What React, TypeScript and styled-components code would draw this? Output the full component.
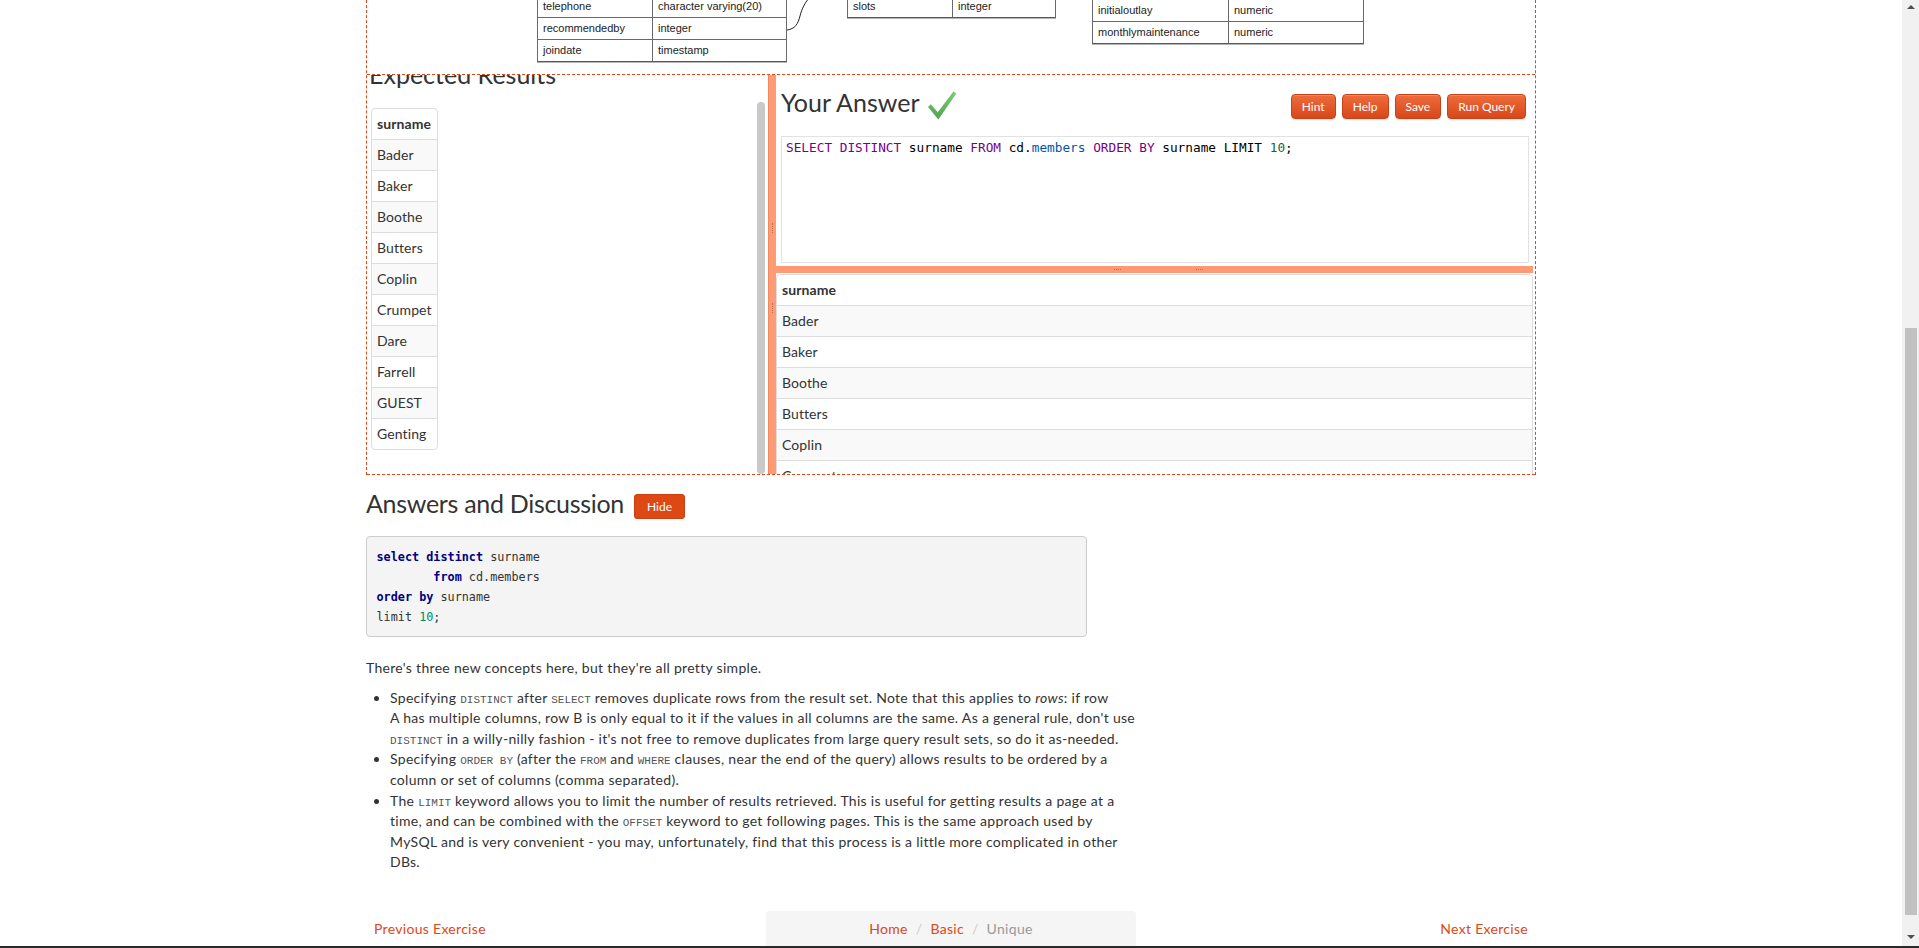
import React from "react";
import styled, { createGlobalStyle } from "styled-components";

const Global = createGlobalStyle`
  html, body { margin: 0; padding: 0; height: 948px; overflow: hidden; background: #fff; }
  body {
    font-family: Lato, "Open Sans", "DejaVu Sans", sans-serif;
    font-size: 14px;
    line-height: 20px;
    letter-spacing: 0.3px;
    color: #333;
  }
  * { box-sizing: border-box; }
`;

const ORANGE = "#dd4814";

/* ---------- window chrome ---------- */
const Viewport = styled.div`
  width: 1919px;
  height: 948px;
  display: flex;
  flex-direction: column;
`;
const Screen = styled.div`
  flex: 1;
  min-height: 0;
  display: flex;
`;
const Main = styled.main`
  flex: 1;
  min-width: 0;
  overflow: hidden;
  display: flex;
  justify-content: center;
`;
const Scrollbar = styled.div`
  width: 17px;
  background: #f1f1f1;
  display: flex;
  flex-direction: column;
  align-items: center;
`;
const ScrollArrow = styled.div<{ $dir: "up" | "down" }>`
  width: 0;
  height: 0;
  margin: ${(p) => (p.$dir === "up" ? "5px 0 8px" : "auto 0 7px")};
  border-left: 4px solid transparent;
  border-right: 4px solid transparent;
  ${(p) =>
    p.$dir === "up"
      ? "border-bottom: 4px solid #505050;"
      : "border-top: 4px solid #505050;"}
`;
const ScrollThumb = styled.div`
  width: 12px;
  height: 587px;
  margin-top: 311px;
  background: #c1c1c1;
`;
const WindowEdge = styled.div`
  height: 2px;
  background: #2a2a2a;
`;

/* ---------- page container ---------- */
const Container = styled.div`
  width: 1170px;
  display: flex;
  flex-direction: column;
`;
const Frame = styled.div`
  flex: none;
  border-left: 1px dashed ${ORANGE};
  border-right: 1px dashed ${ORANGE};
`;

/* ---------- schema diagram ---------- */
const Diagram = styled.div`
  position: relative;
  height: 75px;
  overflow: hidden;
  border-bottom: 1px dashed ${ORANGE};
  letter-spacing: 0;
`;
const SchemaTable = styled.div<{ $left: number; $bottom: number; $width: number }>`
  position: absolute;
  left: ${(p) => p.$left}px;
  bottom: ${(p) => p.$bottom}px;
  width: ${(p) => p.$width}px;
  border-left: 1px solid #6a6a6a;
  border-right: 1px solid #6a6a6a;
  border-bottom: 1px solid #5a5a5a;
  box-shadow: 0 1px 0 #b5b5b5;
  font-family: "Liberation Sans", Arial, sans-serif;
  font-size: 11px;
  color: #222;
`;
const SchemaRow = styled.div<{ $col: number }>`
  display: grid;
  grid-template-columns: ${(p) => p.$col}px 1fr;
  height: 22px;
  border-top: 1px solid #6a6a6a;
`;
const SchemaCell = styled.div`
  padding-left: 5px;
  line-height: 21px;
  white-space: nowrap;
  & + & { border-left: 1px solid #6a6a6a; }
`;
const Connector = styled.svg`
  position: absolute;
  left: 0;
  top: 0;
`;

/* ---------- workspace ---------- */
const Workspace = styled.div`
  height: 400px;
  display: flex;
  border-bottom: 1px dashed ${ORANGE};
`;
const LeftPane = styled.div`
  width: 401px;
  display: flex;
  overflow: hidden;
`;
const LeftContent = styled.div`
  flex: 1;
  padding-left: 4px;
  overflow: hidden;
`;
const ScrolledInner = styled.div`
  margin-top: -28px;
`;
const PaneScroll = styled.div`
  width: 8px;
  margin-right: 3px;
  display: flex;
  flex-direction: column;
`;
const PaneThumb = styled.div`
  flex: 1;
  margin-top: 27px;
  border-radius: 4px;
  background: #c9c9c9;
`;
const VSplitter = styled.div`
  width: 8px;
  background: #fe9b74;
  border-left: 1px solid #f3885f;
  display: flex;
  flex-direction: column;
  align-items: center;
`;
const VHandle = styled.div<{ $top: number }>`
  margin-top: ${(p) => p.$top}px;
  width: 0;
  height: 10px;
  border-left: 1px dotted rgba(120, 60, 40, 0.45);
`;
const RightPane = styled.div`
  flex: 1;
  min-width: 0;
  display: flex;
  flex-direction: column;
  overflow: hidden;
  & > * { flex: none; }
`;
const PaneHeader = styled.div<{ $padLeft: number }>`
  height: 61px;
  padding: 14px 9px 0 ${(p) => p.$padLeft}px;
  display: flex;
  align-items: flex-start;
`;
const Title = styled.h3`
  margin: 0;
  font-size: 25px;
  line-height: 27.5px;
  font-weight: 400;
  letter-spacing: 0;
  color: #333;
  white-space: nowrap;
`;
const ExpectedTitle = styled(Title)`
  margin-left: -2px;
`;
const Check = styled.svg`
  margin: 2px 0 0 7px;
  flex: none;
`;
const ButtonGroup = styled.div`
  margin: 5px 0 0 auto;
  display: flex;
  gap: 6px;
`;
const ActionButton = styled.button`
  height: 25px;
  padding: 0 10px;
  font-family: Lato, "Open Sans", sans-serif;
  font-size: 12px;
  letter-spacing: 0;
  color: #fff;
  background: linear-gradient(#ee6c3c, #d8471a);
  border: 1px solid #c44318;
  border-radius: 4px;
  box-shadow: inset 0 1px 0 rgba(255, 255, 255, 0.18), 0 1px 1px rgba(0, 0, 0, 0.12);
`;
const Editor = styled.div`
  height: 127px;
  margin: 0 6px 0 5px;
  border: 1px solid #e2e2e2;
  padding: 3px 4px 5px;
  font-family: "DejaVu Sans Mono", monospace;
  font-size: 12.75px;
  line-height: 15px;
  letter-spacing: 0;
  color: #000;
  white-space: pre;
`;
const Tok = styled.span<{ $k: "kw" | "var" | "num" }>`
  color: ${(p) => (p.$k === "kw" ? "#708" : p.$k === "var" ? "#05a" : "#164")};
`;
const HSplitter = styled.div`
  height: 7px;
  margin: 3px 2px 0 0;
  background: #fe9b74;
  display: flex;
  align-items: center;
`;
const HHandle = styled.div<{ $left: number }>`
  margin-left: ${(p) => p.$left}px;
  width: 7px;
  height: 0;
  border-top: 1px dotted rgba(120, 60, 40, 0.5);
`;

/* ---------- results tables ---------- */
const Grid = styled.table<{ $full?: boolean }>`
  width: ${(p) => (p.$full ? "calc(100% - 2px)" : "auto")};
  border-collapse: separate;
  border-spacing: 0;
  border: 1px solid #ddd;
  border-radius: 4px;
  font-size: 14px;
  letter-spacing: 0.1px;
  th, td {
    padding: 5px;
    line-height: 20px;
    text-align: left;
    border-top: 1px solid #ddd;
  }
  thead th { border-top: 0; font-weight: 700; }
  tbody tr:nth-child(odd) td { background: #f9f9f9; }
`;
const ResultWrap = styled.div`
  margin-top: 1px;
`;

/* ---------- discussion ---------- */
const DiscussionHeader = styled.div`
  flex: none;
  margin-top: 19px;
  height: 25px;
  display: flex;
  align-items: flex-start;
  gap: 10px;
`;
const DiscussionTitle = styled(Title)`
  margin-top: -4px;
  letter-spacing: -0.3px;
`;
const HideButton = styled.button`
  height: 25px;
  padding: 0 12px;
  font-family: Lato, "Open Sans", sans-serif;
  font-size: 12px;
  letter-spacing: 0;
  color: #fff;
  background: ${ORANGE};
  border: 1px solid #c73f10;
  border-radius: 3px;
`;
const Pre = styled.pre`
  flex: none;
  width: 721px;
  margin: 17px 0 0;
  padding: 9.5px;
  background: #f4f4f4;
  border: 1px solid #ccc;
  border-radius: 4px;
  font-family: "DejaVu Sans Mono", monospace;
  font-size: 11.8px;
  line-height: 20px;
  letter-spacing: 0;
  color: #333;
`;
const Kw = styled.span`
  color: #000080;
  font-weight: 700;
`;
const Num = styled.span`
  color: #008a63;
`;
const Para = styled.p`
  margin: 21px 0 0;
  line-height: 20.6px;
`;
const List = styled.ul`
  width: 830px;
  margin: 9px 0 0;
  padding-left: 24px;
  line-height: 20.6px;
  white-space: nowrap;
  li { line-height: 20.6px; }
`;
const Code = styled.code`
  font-family: "Liberation Mono", "Courier New", monospace;
  font-size: 11px;
  line-height: 1;
  letter-spacing: 0;
  color: #555;
`;

/* ---------- pager ---------- */
const Pager = styled.nav`
  margin-top: auto;
  height: 35px;
  display: grid;
  grid-template-columns: repeat(3, 1fr);
`;
const PagerCell = styled.div<{ $align: "left" | "right" }>`
  padding: 8px;
  text-align: ${(p) => p.$align};
`;
const PagerLink = styled.a`
  color: ${ORANGE};
  text-decoration: none;
`;
const Crumbs = styled.div`
  margin: 0 10px;
  padding: 8px 15px;
  background: #f5f5f5;
  border-radius: 4px 4px 0 0;
  text-align: center;
`;
const Sep = styled.span`
  color: #ccc;
  padding: 0 8px;
`;
const Active = styled.span`
  color: #999;
`;

const names = [
  "Bader",
  "Baker",
  "Boothe",
  "Butters",
  "Coplin",
  "Crumpet",
  "Dare",
  "Farrell",
  "GUEST",
  "Genting",
];

function SurnameTable({ full }: { full?: boolean }) {
  return (
    <Grid $full={full}>
      <thead>
        <tr>
          <th>surname</th>
        </tr>
      </thead>
      <tbody>
        {names.map((n) => (
          <tr key={n}>
            <td>{n}</td>
          </tr>
        ))}
      </tbody>
    </Grid>
  );
}

export default function App() {
  return (
    <Viewport>
      <Global />
      <Screen>
        <Main>
          <Container>
            <Frame>
              <Diagram>
                <SchemaTable $left={170} $bottom={12} $width={250}>
                  <SchemaRow $col={114}>
                    <SchemaCell>telephone</SchemaCell>
                    <SchemaCell>character varying(20)</SchemaCell>
                  </SchemaRow>
                  <SchemaRow $col={114}>
                    <SchemaCell>recommendedby</SchemaCell>
                    <SchemaCell>integer</SchemaCell>
                  </SchemaRow>
                  <SchemaRow $col={114}>
                    <SchemaCell>joindate</SchemaCell>
                    <SchemaCell>timestamp</SchemaCell>
                  </SchemaRow>
                </SchemaTable>
                <SchemaTable $left={480} $bottom={56} $width={209}>
                  <SchemaRow $col={104}>
                    <SchemaCell>slots</SchemaCell>
                    <SchemaCell>integer</SchemaCell>
                  </SchemaRow>
                </SchemaTable>
                <SchemaTable $left={725} $bottom={30} $width={272}>
                  <SchemaRow $col={135}>
                    <SchemaCell>initialoutlay</SchemaCell>
                    <SchemaCell>numeric</SchemaCell>
                  </SchemaRow>
                  <SchemaRow $col={135}>
                    <SchemaCell>monthlymaintenance</SchemaCell>
                    <SchemaCell>numeric</SchemaCell>
                  </SchemaRow>
                </SchemaTable>
                <Connector width="1168" height="74" viewBox="0 0 1168 74">
                  <path
                    d="M420 30 C 428 29, 431 24, 433 16 S 438 3, 442 -2"
                    fill="none"
                    stroke="#222"
                    strokeWidth="1"
                  />
                </Connector>
              </Diagram>

              <Workspace>
                <LeftPane>
                  <LeftContent>
                    <ScrolledInner>
                      <PaneHeader $padLeft={0}>
                        <ExpectedTitle>Expected Results</ExpectedTitle>
                      </PaneHeader>
                      <SurnameTable />
                    </ScrolledInner>
                  </LeftContent>
                  <PaneScroll>
                    <PaneThumb />
                  </PaneScroll>
                </LeftPane>
                <VSplitter>
                  <VHandle $top={148} />
                  <VHandle $top={70} />
                </VSplitter>
                <RightPane>
                  <PaneHeader $padLeft={5}>
                    <Title>Your Answer</Title>
                    <Check width="30" height="29" viewBox="0 0 30 30">
                      <defs>
                        <linearGradient id="chk" x1="0" y1="0" x2="0" y2="1">
                          <stop offset="0" stopColor="#7ccb74" />
                          <stop offset="1" stopColor="#4fa552" />
                        </linearGradient>
                      </defs>
                      <path
                        d="M0.5 16.5 L3.5 13.8 L10.6 22 L26.8 0.5 L29.8 2.6 L11.2 29.5 Z"
                        fill="url(#chk)"
                      />
                    </Check>
                    <ButtonGroup>
                      <ActionButton>Hint</ActionButton>
                      <ActionButton>Help</ActionButton>
                      <ActionButton>Save</ActionButton>
                      <ActionButton>Run Query</ActionButton>
                    </ButtonGroup>
                  </PaneHeader>
                  <Editor>
                    <Tok $k="kw">SELECT</Tok> <Tok $k="kw">DISTINCT</Tok> surname{" "}
                    <Tok $k="kw">FROM</Tok> cd.<Tok $k="var">members</Tok>{" "}
                    <Tok $k="kw">ORDER</Tok> <Tok $k="kw">BY</Tok> surname LIMIT{" "}
                    <Tok $k="num">10</Tok>;
                  </Editor>
                  <HSplitter>
                    <HHandle $left={338} />
                    <HHandle $left={75} />
                  </HSplitter>
                  <ResultWrap>
                    <SurnameTable full />
                  </ResultWrap>
                </RightPane>
              </Workspace>
            </Frame>

            <DiscussionHeader>
              <DiscussionTitle>Answers and Discussion</DiscussionTitle>
              <HideButton>Hide</HideButton>
            </DiscussionHeader>
            <Pre>
              <Kw>select</Kw> <Kw>distinct</Kw> surname{"\n"}
              {"        "}
              <Kw>from</Kw> cd.members{"\n"}
              <Kw>order</Kw> <Kw>by</Kw> surname{"\n"}
              limit <Num>10</Num>;
            </Pre>
            <Para>There's three new concepts here, but they're all pretty simple.</Para>
            <List>
              <li>
                Specifying <Code>DISTINCT</Code> after <Code>SELECT</Code> removes duplicate rows
                from the result set. Note that this applies to <em>rows</em>: if row
                <br />A has multiple columns, row B is only equal to it if the values in all columns
                are the same. As a general rule, don't use
                <br />
                <Code>DISTINCT</Code> in a willy-nilly fashion - it's not free to remove duplicates
                from large query result sets, so do it as-needed.
              </li>
              <li>
                Specifying <Code>ORDER BY</Code> (after the <Code>FROM</Code> and{" "}
                <Code>WHERE</Code> clauses, near the end of the query) allows results to be ordered
                by a
                <br />
                column or set of columns (comma separated).
              </li>
              <li>
                The <Code>LIMIT</Code> keyword allows you to limit the number of results retrieved.
                This is useful for getting results a page at a
                <br />
                time, and can be combined with the <Code>OFFSET</Code> keyword to get following
                pages. This is the same approach used by
                <br />
                MySQL and is very convenient - you may, unfortunately, find that this process is a
                little more complicated in other
                <br />
                DBs.
              </li>
            </List>

            <Pager>
              <PagerCell $align="left">
                <PagerLink href="#">Previous Exercise</PagerLink>
              </PagerCell>
              <Crumbs>
                <PagerLink href="#">Home</PagerLink>
                <Sep>/</Sep>
                <PagerLink href="#">Basic</PagerLink>
                <Sep>/</Sep>
                <Active>Unique</Active>
              </Crumbs>
              <PagerCell $align="right">
                <PagerLink href="#">Next Exercise</PagerLink>
              </PagerCell>
            </Pager>
          </Container>
        </Main>
        <Scrollbar>
          <ScrollArrow $dir="up" />
          <ScrollThumb />
          <ScrollArrow $dir="down" />
        </Scrollbar>
      </Screen>
      <WindowEdge />
    </Viewport>
  );
}
